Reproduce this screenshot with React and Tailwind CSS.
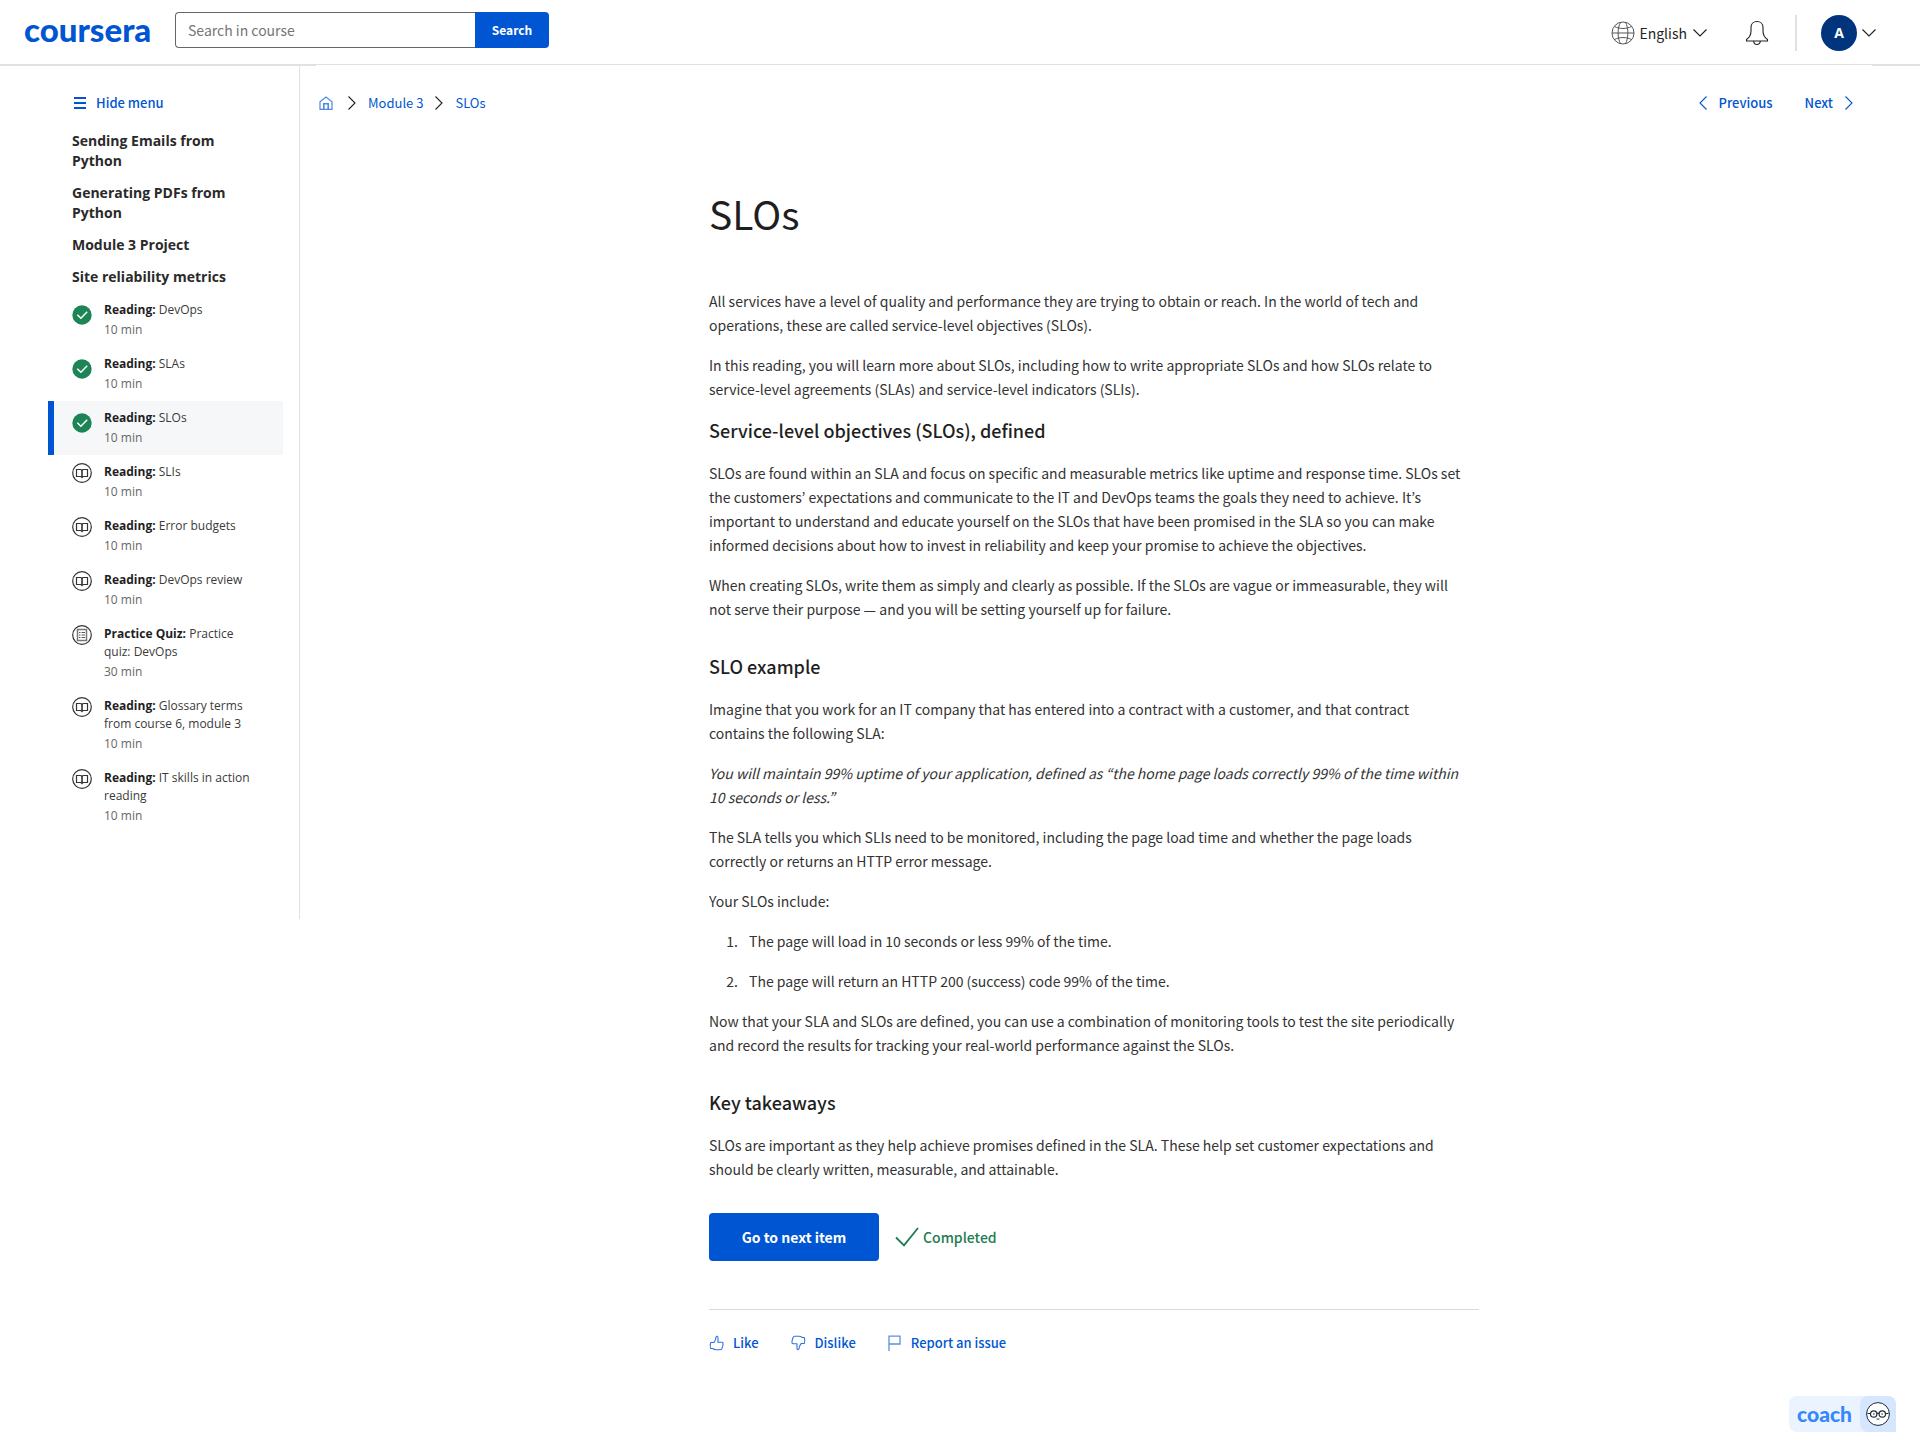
const sans = 'font-["Noto_Sans_CJK_KR","Noto_Sans",sans-serif]';
const openSans = 'font-["Open_Sans","Noto_Sans",sans-serif]';

function Chevron({ d, className, box = "0 0 8 14" }) {
  return (
    <svg viewBox={box} className={className} fill="none" stroke="currentColor" strokeWidth="1.1" aria-hidden="true">
      <path d={d} />
    </svg>
  );
}
const RIGHT = "M0.5 0.5 7 7 0.5 13.5";
const LEFT = "M7.5 0.5 1 7 7.500 13.500";
const DOWN = "M0.5 0.5 7 7 13.5 0.5";

function GlobeIcon() {
  return (
    <svg viewBox="0 0 24 24" className="size-6" fill="none" stroke="#555" strokeWidth="1" aria-hidden="true">
      <circle cx="12" cy="12" r="11" />
      <path d="M1 12h22M3.500 5.500c5 2.600 12 2.600 17 0M3.500 18.500c5-2.600 12-2.600 17 0M9.500 1.300C6.300 7 6.300 17 9.500 22.700M14.500 1.300C17.700 7 17.700 17 14.500 22.700" />
    </svg>
  );
}

function BellIcon() {
  return (
    <svg viewBox="0 0 24 26" className="h-[26px] w-6" fill="none" stroke="#222" strokeWidth="1.1" aria-hidden="true">
      <path d="M1.500 21h21v-1.500c-2.900-1.900-4.500-5-4.500-8.500V7.500C18 4 15.500 1.500 12 1.500S6 4 6 7.500V11c0 3.500-1.600 6.600-4.500 8.500zM8.700 21c0 4.700 6.600 4.700 6.600 0" />
    </svg>
  );
}

function HomeIcon() {
  return (
    <svg viewBox="0 0 14 14" className="size-3.5" fill="none" stroke="#4d8ae4" strokeWidth="1.200" aria-hidden="true">
      <path d="M1 5.800 7 1l6 4.800V13.300H1z" />
      <path d="M4.800 13V7.700h4.400V13" strokeWidth="1.600" />
    </svg>
  );
}

function DoneIcon() {
  return (
    <svg viewBox="0 0 20 20" className="mt-1 size-5 shrink-0" role="img" aria-label="Completed">
      <circle cx="10" cy="10" r="9.700" fill="#1d8455" />
      <path d="m5.300 9.700 3.600 3.500 6.300-6.400" fill="none" stroke="#fff" strokeWidth="1.500" />
    </svg>
  );
}

function BookIcon() {
  return (
    <svg viewBox="0 0 20 20" className="size-5 shrink-0" fill="none" stroke="#333" aria-hidden="true">
      <circle cx="10" cy="10" r="9.300" strokeWidth="1.200" />
      <path d="M10 7.300C9.500 6.600 8.900 6.500 8.200 6.500H4.500v7h3.700c.9 0 1.500.2 1.800.8.300-.6.900-.8 1.800-.8h3.700v-7h-3.700c-.7 0-1.300.1-1.800.8z" strokeWidth="1.200" />
      <path d="M10 7v7.500" strokeWidth="1.600" />
    </svg>
  );
}

function QuizIcon() {
  return (
    <svg viewBox="0 0 20 20" className="size-5 shrink-0" fill="none" stroke="#333" aria-hidden="true">
      <circle cx="10" cy="10" r="9.300" strokeWidth="1.200" />
      <path d="M5.500 4.500h9v11h-9z" stroke="#777" strokeWidth="1.500" />
      <path d="M7 7.500h1.500M7 10h1.500M7 12.500h1.500M9.500 7.500H13M9.500 10H13M9.500 12.500H13" stroke="#555" strokeWidth="1" />
    </svg>
  );
}

function ThumbIcon({ down }) {
  return (
    <svg viewBox="0 0 15 16" className={down ? "h-4 w-[15px] rotate-180" : "h-4 w-[15px]"} fill="none" stroke="#2f74de" strokeWidth="1.100" strokeLinejoin="round" aria-hidden="true">
      <path d="M4.800 7.500H1.700C1 9.500 1 11.500 1.700 13.500h2c1 .8 1.800 1.200 3.300 1.200h4.300c1 0 1.500-.6 1.700-1.500.5-1.200.8-2.200.9-3.200.3-1.300.2-2.800-.9-2.800L9 7.300V2.800C9 1 7.300.8 7 2.300 6.800 4.500 6.500 5.800 4.800 7.500z" />
    </svg>
  );
}

function FlagIcon() {
  return (
    <svg viewBox="0 0 13 16" className="h-4 w-[13px]" fill="none" stroke="#5a90e6" strokeWidth="1.300" aria-hidden="true">
      <path d="M1 16V1.200h11V9H1" />
    </svg>
  );
}

function CoachFace() {
  return (
    <svg viewBox="0 0 24 24" className="size-6" fill="none" stroke="#1f2937" aria-hidden="true">
      <circle cx="12" cy="12" r="11.400" fill="#fff" strokeWidth="1" />
      <circle cx="7.700" cy="12" r="3.200" strokeWidth="1.200" />
      <circle cx="16.300" cy="12" r="3.200" strokeWidth="1.200" />
      <path d="M1.500 11.500h3M19.500 11.500h3M11 11.500q1-.8 2 0" strokeWidth="1.200" />
      <path d="M10.500 16.800q1.500 1 3 0" strokeWidth="0.900" />
      <circle cx="7.900" cy="12" r=".8" fill="#1f2937" stroke="none" />
      <circle cx="16.100" cy="12" r=".8" fill="#1f2937" stroke="none" />
    </svg>
  );
}

const sections = ["Sending Emails from Python", "Generating PDFs from Python", "Module 3 Project", "Site reliability metrics"];

const items = [
  { kind: "Reading", title: "DevOps", time: "10 min", done: true },
  { kind: "Reading", title: "SLAs", time: "10 min", done: true },
  { kind: "Reading", title: "SLOs", time: "10 min", done: true, current: true },
  { kind: "Reading", title: "SLIs", time: "10 min" },
  { kind: "Reading", title: "Error budgets", time: "10 min" },
  { kind: "Reading", title: "DevOps review", time: "10 min" },
  { kind: "Practice Quiz", title: "Practice quiz: DevOps", time: "30 min" },
  { kind: "Reading", title: "Glossary terms from course 6, module 3", time: "10 min" },
  { kind: "Reading", title: "IT skills in action reading", time: "10 min" },
];

function Header() {
  return (
    <header>
      <div className="flex h-[65px] items-start justify-between border-b border-[#e1e1e1] pr-11 pl-6">
        <div className="flex">
          <a href="#home" className='mt-[9px] w-[151px] font-["Lato",sans-serif] text-[33px] leading-10 font-black text-[#0056d2]'>coursera</a>
          <form className="mt-3 flex h-9" onSubmit={(e) => e.preventDefault()}>
            <input
              type="text"
              aria-label="Search in course"
              placeholder="Search in course"
              className="w-[300px] rounded-l border border-r-0 border-[#666] px-3 text-sm text-[#333] placeholder:text-[#757575]"
            />
            <button className="w-[74px] rounded-r bg-[#0056d2] text-xs font-bold text-white">Search</button>
          </form>
        </div>
        <div className="flex h-[66px] items-center text-[#1f1f1f]">
          <button className="flex items-center gap-1 text-sm">
            <GlobeIcon />
            English
            <Chevron d={DOWN} box="0 0 14 8" className="ml-0.5 h-2 w-3.5" />
          </button>
          <button aria-label="Notifications" className="ml-[38px]">
            <BellIcon />
          </button>
          <span className="mr-6 ml-[26px] h-9 w-0.5 bg-[#e1e1e1]" />
          <button className="flex items-center gap-[5px]" aria-label="Account">
            <span className='flex size-9 items-center justify-center rounded-full bg-[#00347d] font-["Open_Sans",sans-serif] text-sm font-bold text-white'>A</span>
            <Chevron d={DOWN} box="0 0 14 8" className="h-2 w-3.5" />
          </button>
        </div>
      </div>
      <div className="flex h-px justify-between">
        <span className="w-[316px] bg-[#e1e1e1]" />
        <span className="w-12 bg-[#e1e1e1]" />
      </div>
    </header>
  );
}

function Sidebar() {
  return (
    <aside className="h-[853px] w-[300px] shrink-0 border-r border-[#e1e1e1] pt-[27px]">
      <button className="ml-[74px] flex h-5 items-center gap-2.5 text-[13px] font-medium text-[#0056d2]">
        <svg viewBox="0 0 12 12" className="size-3" fill="currentColor" aria-hidden="true">
          <path d="M0 0h12v2H0zM0 5h12v2H0zM0 10h12v2H0z" />
        </svg>
        Hide menu
      </button>
      <nav className={`mt-[18px] ${openSans} text-[#1f1f1f]`}>
        <ul className="flex flex-col gap-3 pr-12 pl-[72px]">
          {sections.map((s) => (
            <li key={s}>
              <a href="#section" className="block text-sm leading-5 font-bold text-[#2a2a2a]">{s}</a>
            </li>
          ))}
        </ul>
        <ul className="mt-1.5 mr-4 ml-12 text-xs leading-[18px]">
          {items.map((it) => (
            <li key={it.title}>
              <a
                href="#item"
                className={
                  it.current
                    ? "flex gap-3 border-l-6 border-[#0056d2] bg-[#f5f7f8] py-2 pr-8 pl-[18px]"
                    : "flex gap-3 border-l-6 border-transparent py-2 pr-8 pl-[18px]"
                }
              >
                {it.done ? <DoneIcon /> : it.kind === "Reading" ? <BookIcon /> : <QuizIcon />}
                <span className="flex flex-col gap-0.5">
                  <span className="text-[#3a3a3a]">
                    <strong className="font-bold text-[#1f1f1f]">{it.kind}:</strong> {it.title}
                  </span>
                  <span className="text-[#666]">{it.time}</span>
                </span>
              </a>
            </li>
          ))}
        </ul>
      </nav>
    </aside>
  );
}

function Heading({ children, first }) {
  return (
    <h2 className={`${first ? "mt-[17px]" : "mt-[33px]"} mb-[19px] text-lg leading-6 font-medium text-[#1f1f1f]`}>{children}</h2>
  );
}

function Article() {
  return (
    <article className="mx-auto mt-[76px] max-w-[770px] text-sm leading-6 text-[#333]">
      <h1 className="mb-[52px] text-[39px] leading-[48px] text-[#1f1f1f]">SLOs</h1>
      <div className="pr-4">
        <div className="flex flex-col gap-4">
          <p>All services have a level of quality and performance they are trying to obtain or reach. In the world of tech and operations, these are called service-level objectives (SLOs).</p>
          <p>In this reading, you will learn more about SLOs, including how to write appropriate SLOs and how SLOs relate to service-level agreements (SLAs) and service-level indicators (SLIs).</p>
        </div>
        <Heading first>Service-level objectives (SLOs), defined</Heading>
        <div className="flex flex-col gap-4">
          <p>SLOs are found within an SLA and focus on specific and measurable metrics like uptime and response time. SLOs set the customers’ expectations and communicate to the IT and DevOps teams the goals they need to achieve. It’s important to understand and educate yourself on the SLOs that have been promised in the SLA so you can make informed decisions about how to invest in reliability and keep your promise to achieve the objectives.</p>
          <p>When creating SLOs, write them as simply and clearly as possible. If the SLOs are vague or immeasurable, they will not serve their purpose — and you will be setting yourself up for failure.</p>
        </div>
        <Heading>SLO example</Heading>
        <div className="flex flex-col gap-4">
          <p>Imagine that you work for an IT company that has entered into a contract with a customer, and that contract contains the following SLA:</p>
          <p className="italic">You will maintain 99% uptime of your application, defined as “the home page loads correctly 99% of the time within 10 seconds or less.”</p>
          <p>The SLA tells you which SLIs need to be monitored, including the page load time and whether the page loads correctly or returns an HTTP error message.</p>
          <p>Your SLOs include:</p>
          <ol className="flex list-decimal flex-col gap-4 pl-8">
            <li className="pl-2">The page will load in 10 seconds or less 99% of the time.</li>
            <li className="pl-2">The page will return an HTTP 200 (success) code 99% of the time.</li>
          </ol>
          <p>Now that your SLA and SLOs are defined, you can use a combination of monitoring tools to test the site periodically and record the results for tracking your real-world performance against the SLOs.</p>
        </div>
        <Heading>Key takeaways</Heading>
        <p>SLOs are important as they help achieve promises defined in the SLA. These help set customer expectations and should be clearly written, measurable, and attainable.</p>
      </div>
      <div className="mt-8 flex items-center gap-4">
        <button className="h-12 w-[170px] rounded-sm bg-[#0056d2] text-sm font-bold text-white">Go to next item</button>
        <span className="flex items-center gap-1 text-sm font-medium text-[#1d7c50]">
          <svg viewBox="0 0 24 20" className="h-5 w-6" fill="none" stroke="currentColor" strokeWidth="1.800" aria-hidden="true">
            <path d="m1 10.500 8 7.800L23 1" />
          </svg>
          Completed
        </span>
      </div>
      <div className="mt-12 flex gap-8 border-t border-[#dadada] pt-[21px] text-[13px] leading-6 font-medium text-[#0056d2]">
        <button className="flex items-center gap-[9px]"><ThumbIcon />Like</button>
        <button className="flex items-center gap-[9px]"><ThumbIcon down />Dislike</button>
        <button className="flex items-center gap-2.5"><FlagIcon />Report an issue</button>
      </div>
    </article>
  );
}

export default function App() {
  return (
    <div className={`relative min-h-screen bg-white ${sans}`}>
      <Header />
      <div className="flex items-start">
        <Sidebar />
        <main className="min-w-0 flex-1 pr-8">
          <div className="flex h-[47px] items-end justify-between pr-[35px] pl-[19px] text-[13px] text-[#0056d2]">
            <nav aria-label="Breadcrumb" className="flex h-5 items-center gap-3">
              <a href="#course" aria-label="Course home" className="mr-[3px]"><HomeIcon /></a>
              <Chevron d={RIGHT} className="h-3.5 w-2 text-[#222]" />
              <a href="#module">Module 3</a>
              <Chevron d={RIGHT} className="h-3.5 w-2 text-[#222]" />
              <a href="#slos">SLOs</a>
            </nav>
            <div className="flex h-5 gap-8 font-medium">
              <a href="#previous" className="flex items-center gap-3"><Chevron d={LEFT} className="h-3.5 w-2" />Previous</a>
              <a href="#next" className="flex items-center gap-3">Next<Chevron d={RIGHT} className="h-3.5 w-2" /></a>
            </div>
          </div>
          <Article />
        </main>
      </div>
      <button className="fixed right-6 bottom-6 flex h-9 items-center rounded-lg rounded-br-none bg-[#ebf3ff]" aria-label="Open coach">
        <span className='px-2 font-["Lato",sans-serif] text-[21px] font-black text-[#3587fc]'>coach</span>
        <span className="flex h-9 w-9 items-center justify-center rounded-lg rounded-br-none bg-[#d6e6ff]"><CoachFace /></span>
      </button>
    </div>
  );
}
